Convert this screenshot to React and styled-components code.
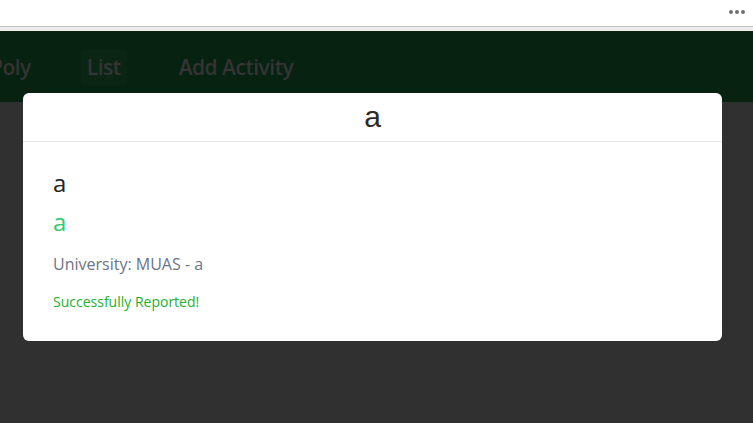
import React from 'react';
import styled, { createGlobalStyle } from 'styled-components';

const GlobalStyle = createGlobalStyle`
  html, body {
    margin: 0;
    padding: 0;
    height: 100%;
    background: #303030;
    overflow: hidden;
  }
  #root {
    height: 100%;
  }
`;

const Page = styled.div`
  position: relative;
  height: 100%;
  display: flex;
  flex-direction: column;
  font-family: "Open Sans", "Noto Sans", sans-serif;
`;

const TopBar = styled.div`
  height: 26px;
  background: #ffffff;
  border-bottom: 1px solid #c2c2c2;
  display: flex;
  align-items: center;
  justify-content: flex-end;
  padding-right: 8px;
`;

const Dots = styled.div`
  display: flex;
  gap: 2px;
  margin-top: -2px;
`;

const Dot = styled.span`
  width: 4px;
  height: 4px;
  border-radius: 50%;
  background: #6f6f6f;
`;

const Strip = styled.div`
  height: 4px;
  background: #ececec;
`;

const NavBar = styled.nav`
  height: 71px;
  background: #072211;
  display: flex;
  align-items: center;
`;

const NavItem = styled.a`
  display: block;
  font-size: 21px;
  font-weight: 600;
  letter-spacing: -0.5px;
  color: #343434;
  padding: 4px 6px;
  margin-left: ${(p) => p.$gap}px;
  border-radius: 3px;
  background: ${(p) => (p.$active ? '#0b2515' : 'transparent')};
  text-decoration: none;
`;

const Backdrop = styled.div`
  flex: 1;
  background: #303030;
`;

const Modal = styled.div`
  position: absolute;
  top: 93px;
  left: 23px;
  width: 699px;
  height: 248px;
  background: #ffffff;
  border-radius: 6px;
  display: flex;
  flex-direction: column;
`;

const ModalHeader = styled.div`
  height: 48px;
  border-bottom: 1px solid #e6e6e6;
  display: flex;
  align-items: center;
  justify-content: center;
`;

const ModalTitle = styled.h2`
  margin: 0;
  font-family: "Liberation Sans", Arial, sans-serif;
  font-weight: 400;
  font-size: 30px;
  color: #2a2a2a;
  line-height: 1;
`;

const ModalBody = styled.div`
  padding: 21px 30px 0;
  display: flex;
  flex-direction: column;
`;

const Line = styled.p`
  margin: ${(p) => p.$mt || 0}px 0 0;
  font-size: ${(p) => p.$size}px;
  color: ${(p) => p.$color};
  line-height: ${(p) => p.$lh}px;
`;

export default function App() {
  return (
    <>
      <GlobalStyle />
      <Page>
        <TopBar>
          <Dots>
            <Dot />
            <Dot />
            <Dot />
          </Dots>
        </TopBar>
        <Strip />
        <NavBar>
          <NavItem $gap={-16}>Poly</NavItem>
          <NavItem $gap={44} $active>List</NavItem>
          <NavItem $gap={46}>Add Activity</NavItem>
        </NavBar>
        <Backdrop />
        <Modal>
          <ModalHeader>
            <ModalTitle>a</ModalTitle>
          </ModalHeader>
          <ModalBody>
            <Line $size={24} $lh={40} $color="#222222">a</Line>
            <Line $size={24} $lh={40} $mt={-1} $color="#2ecc71">a</Line>
            <Line $size={16} $lh={40} $mt={2} $color="#6c7486">University: MUAS - a</Line>
            <Line $size={14} $lh={36} $color="#22b030">Successfully Reported!</Line>
          </ModalBody>
        </Modal>
      </Page>
    </>
  );
}
